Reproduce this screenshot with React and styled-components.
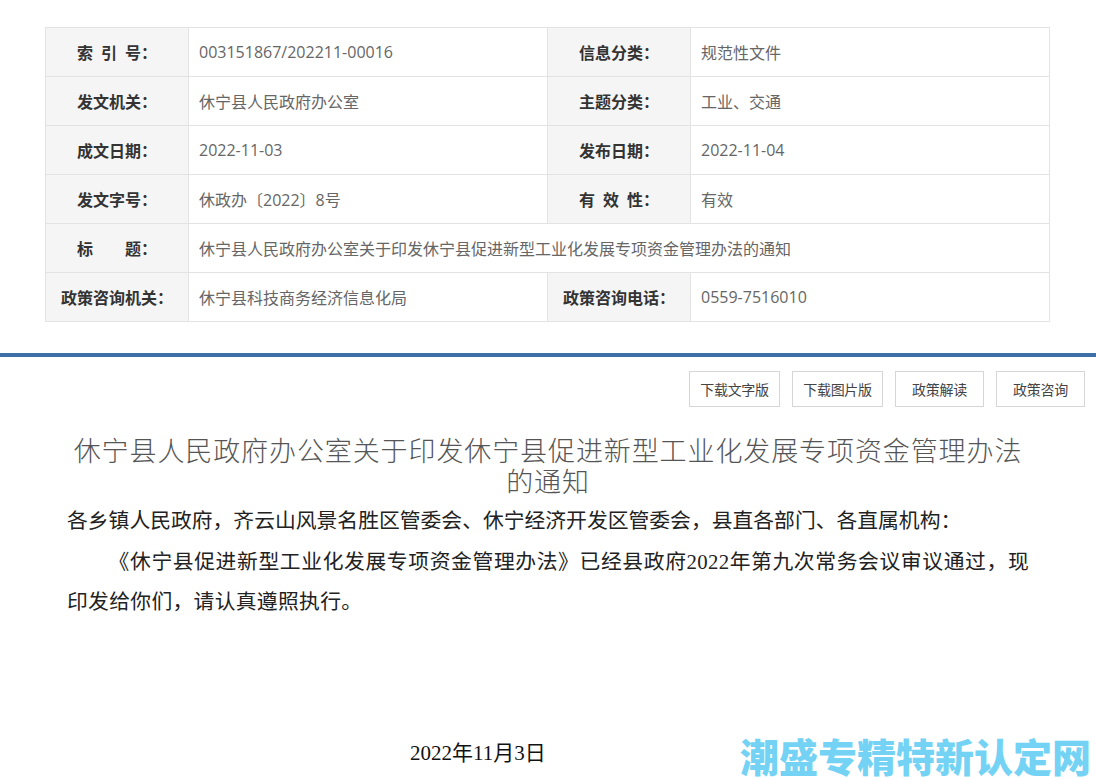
import React from "react";
import styled, { createGlobalStyle } from "styled-components";

const GlobalStyle = createGlobalStyle`
  html, body {
    margin: 0;
    padding: 0;
    background: #fff;
  }
  body {
    font-family: "Noto Sans CJK SC", sans-serif;
  }
`;

const Page = styled.div`
  position: relative;
  width: 1096px;
  height: 778px;
  overflow: hidden;
  padding-top: 27px;
  box-sizing: border-box;
`;

const InfoTable = styled.table`
  margin-left: 45px;
  width: 1005px;
  border-collapse: collapse;
  table-layout: fixed;
  font-size: 16px;
`;

const Label = styled.th`
  width: 142px;
  height: 48px;
  padding: 0;
  background: #f5f5f5;
  border: 1px solid #e3e3e3;
  color: #333;
  font-weight: 700;
  text-align: center;
  white-space: pre;
  font-family: "Noto Sans CJK SC", sans-serif;
`;

const Value = styled.td`
  height: 48px;
  padding: 0 0 0 10px;
  border: 1px solid #e3e3e3;
  color: #666;
  font-family: "Open Sans", "Noto Sans CJK SC", sans-serif;
  width: ${(p) => p.$w || "auto"};
`;

const Rule = styled.div`
  margin-top: 31px;
  height: 4px;
  background: #3d6fa9;
`;

const Toolbar = styled.div`
  display: flex;
  justify-content: flex-end;
  gap: 12px;
  padding: 14px 11px 0 0;
`;

const ToolButton = styled.div`
  width: ${(p) => p.$w}px;
  height: 36px;
  box-sizing: border-box;
  border: 1px solid #d6d6d6;
  display: flex;
  align-items: center;
  justify-content: center;
  font-size: 14px;
  color: #444;
  letter-spacing: -0.3px;
`;

const Title = styled.h1`
  margin: 27px auto 0;
  width: 960px;
  font-size: 27px;
  line-height: 31px;
  font-weight: 300;
  letter-spacing: 0.9px;
  color: #555;
  text-align: center;
`;

const Body = styled.div`
  padding: 5px 67px 0 67px;
  font-family: "Liberation Serif", "Noto Sans CJK SC", serif;
  font-size: 20.8px;
  line-height: 40.5px;
  color: #222;
`;

const Para = styled.p`
  margin: 0;
  text-align: justify;
  text-indent: ${(p) => (p.$indent ? "2em" : "0")};
  letter-spacing: ${(p) => (p.$indent ? "0.3px" : "0")};
`;

const DateLine = styled.div`
  margin-top: 113px;
  padding-left: 410px;
  font-family: "Liberation Serif", "Noto Sans CJK SC", serif;
  font-size: 21px;
  color: #111;
`;

const Watermark = styled.div`
  position: absolute;
  left: 740px;
  top: 736px;
  font-size: 39px;
  line-height: 39px;
  font-weight: 900;
  color: #74d3f4;
  white-space: nowrap;
`;

const rows = [
  ["索\u2002引\u2002号：", "003151867/202211-00016", "信息分类：", "规范性文件"],
  ["发文机关：", "休宁县人民政府办公室", "主题分类：", "工业、交通"],
  ["成文日期：", "2022-11-03", "发布日期：", "2022-11-04"],
  ["发文字号：", "休政办〔2022〕8号", "有\u2002效\u2002性：", "有效"],
];

const buttons = [
  ["下载文字版", 91],
  ["下载图片版", 91],
  ["政策解读", 89],
  ["政策咨询", 89],
];

export default function App() {
  return (
    <>
      <GlobalStyle />
      <Page>
        <InfoTable>
          <tbody>
            {rows.map((r) => (
              <tr key={r[0]}>
                <Label>{r[0]}</Label>
                <Value $w="348px">{r[1]}</Value>
                <Label>{r[2]}</Label>
                <Value>{r[3]}</Value>
              </tr>
            ))}
            <tr>
              <Label>{"标　　题："}</Label>
              <Value colSpan={3}>
                休宁县人民政府办公室关于印发休宁县促进新型工业化发展专项资金管理办法的通知
              </Value>
            </tr>
            <tr>
              <Label>政策咨询机关：</Label>
              <Value>休宁县科技商务经济信息化局</Value>
              <Label>政策咨询电话：</Label>
              <Value>0559-7516010</Value>
            </tr>
          </tbody>
        </InfoTable>
        <Rule />
        <Toolbar>
          {buttons.map(([t, w]) => (
            <ToolButton key={t} $w={w}>
              {t}
            </ToolButton>
          ))}
        </Toolbar>
        <Title>休宁县人民政府办公室关于印发休宁县促进新型工业化发展专项资金管理办法的通知</Title>
        <Body>
          <Para>各乡镇人民政府，齐云山风景名胜区管委会、休宁经济开发区管委会，县直各部门、各直属机构：</Para>
          <Para $indent>
            《休宁县促进新型工业化发展专项资金管理办法》已经县政府2022年第九次常务会议审议通过，现印发给你们，请认真遵照执行。
          </Para>
        </Body>
        <DateLine>2022年11月3日</DateLine>
        <Watermark>潮盛专精特新认定网</Watermark>
      </Page>
    </>
  );
}
